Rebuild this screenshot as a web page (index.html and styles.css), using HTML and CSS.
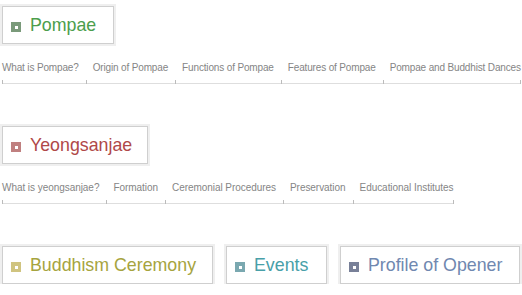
FILE: index.html
```html
<!DOCTYPE html>
<html>
<head>
<meta charset="utf-8">
<link rel="stylesheet" href="styles.css">
</head>
<body>
<div class="page">
  <section class="sec">
    <div class="box box--green"><span class="ico"></span><span class="ttl">Pompae</span></div>
    <ul class="nav nav--tight">
      <li>What is Pompae?</li>
      <li>Origin of Pompae</li>
      <li>Functions of Pompae</li>
      <li>Features of Pompae</li>
      <li>Pompae and Buddhist Dances</li>
    </ul>
  </section>
  <section class="sec">
    <div class="box box--red"><span class="ico"></span><span class="ttl">Yeongsanjae</span></div>
    <ul class="nav nav--loose">
      <li>What is yeongsanjae?</li>
      <li>Formation</li>
      <li>Ceremonial Procedures</li>
      <li>Preservation</li>
      <li>Educational Institutes</li>
    </ul>
  </section>
  <div class="row">
    <div class="box box--olive"><span class="ico"></span><span class="ttl">Buddhism Ceremony</span></div>
    <div class="box box--teal"><span class="ico"></span><span class="ttl">Events</span></div>
    <div class="box box--blue"><span class="ico"></span><span class="ttl">Profile of Opener</span></div>
  </div>
</div>
</body>
</html>
```
FILE: styles.css
```css
html, body {
  margin: 0;
  background: #fff;
  font-family: "Liberation Sans", Arial, sans-serif;
}
.page {
  padding: 6px 0 0 2px;
}
.sec {
  margin-bottom: 42px;
}
.box {
  display: flex;
  align-items: center;
  flex: none;
  height: 38px;
  box-sizing: border-box;
  border: 1px solid #cfcfcf;
  box-shadow: 0 0 0 2px #efefef;
  padding: 0 0 0 8px;
  background: #fff;
}
.ico {
  position: relative;
  width: 10px;
  height: 10px;
  margin: 4px 9px 0 0;
  flex: none;
}
.ico::after {
  content: "";
  position: absolute;
  left: 4px;
  top: 4px;
  width: 3px;
  height: 3px;
  background: #fff;
}
.ttl {
  font-size: 17.8px;
  line-height: 18px;
  white-space: nowrap;
}
.box--green { width: 112px; }
.box--red { width: 146px; }
.box--olive { width: 211px; }
.box--teal { width: 101px; }
.box--blue { width: 180px; }
.box--green .ico { background: #7a9a7a; }
.box--green .ttl { color: #4c9e4c; }
.box--red .ico { background: #c08080; }
.box--red .ttl { color: #b04848; }
.box--olive .ico { background: #d0c480; }
.box--olive .ttl { color: #a6a43e; }
.box--teal .ico { background: #7aa8b0; }
.box--teal .ttl { color: #48a0a8; }
.box--blue .ico { background: #788098; }
.box--blue .ttl { color: #7088b0; }

.nav {
  display: flex;
  width: fit-content;
  list-style: none;
  margin: 18px 0 0;
  padding: 0;
  border-bottom: 1px solid #dedede;
  position: relative;
}
.nav li {
  position: relative;
  font-size: 10px;
  line-height: 12px;
  color: #858585;
  padding: 0 7px 9px;
  white-space: nowrap;
}
.nav--tight li { letter-spacing: -0.15px; }
.nav--loose li { letter-spacing: -0.05px; }
.nav li:first-child { padding-left: 0; }
.nav li:last-child { padding-right: 0; }
.nav li::before {
  content: "";
  position: absolute;
  left: 0;
  bottom: -1px;
  width: 1px;
  height: 4px;
  background: #bbb;
}
.nav li:last-child::after {
  content: "";
  position: absolute;
  right: 0;
  bottom: -1px;
  width: 1px;
  height: 4px;
  background: #bbb;
}
.row {
  display: flex;
  gap: 13px;
}
```
